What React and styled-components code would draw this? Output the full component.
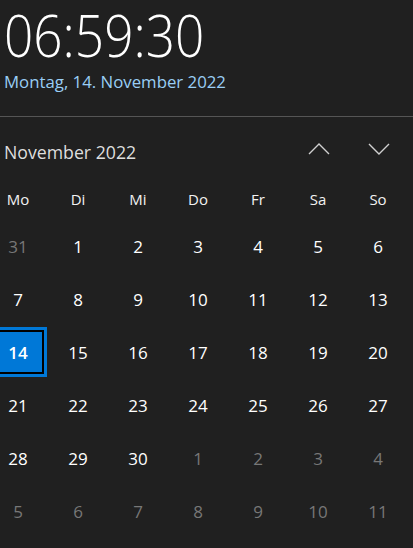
import styled, { createGlobalStyle } from "styled-components";

const GlobalStyle = createGlobalStyle`
  html, body {
    margin: 0;
    padding: 0;
    background: #202020;
  }
  body {
    font-family: "Open Sans", "Noto Sans", sans-serif;
    color: #fff;
  }
`;

const Panel = styled.div`
  width: 413px;
  height: 548px;
  overflow: hidden;
  background: #202020;
`;

const ClockSection = styled.div`
  padding: 0 4px;
  height: 116px;
  border-bottom: 1px solid #555;
`;

const Time = styled.div`
  font-size: 59px;
  font-weight: 300;
  line-height: 68px;
  transform-origin: left top;
  transform: scaleX(0.87);
  white-space: nowrap;
`;

const DateLine = styled.div`
  margin-top: 3px;
  font-size: 16.8px;
  line-height: 22px;
  color: #99cef5;
`;

const MonthBar = styled.div`
  display: flex;
  align-items: center;
  height: 68px;
  padding-left: 4px;
  margin-top: 1px;
`;

const MonthTitle = styled.div`
  flex: 1;
  font-size: 17.7px;
  color: #dedede;
  margin-top: 0;
`;

const NavButton = styled.button`
  width: 60px;
  height: 40px;
  border: 0;
  padding: 0;
  background: transparent;
  display: flex;
  align-items: center;
  justify-content: center;
  margin-top: -6px;
`;

const NavGroup = styled.div`
  display: flex;
  margin-right: 4px;
`;

const Grid = styled.div`
  display: grid;
  grid-template-columns: repeat(7, 58px);
  column-gap: 2px;
  row-gap: 3px;
  margin-left: -11px;
  margin-top: -9px;
`;

const WeekDay = styled.div`
  height: 44px;
  margin-bottom: -3px;
  display: flex;
  align-items: center;
  justify-content: center;
  font-size: 15px;
  color: #f2f2f2;
`;

const Day = styled.div`
  height: 50px;
  box-sizing: border-box;
  display: flex;
  align-items: center;
  justify-content: center;
  font-size: 17px;
  color: ${(p) => (p.$muted ? "#777" : "#fff")};
  ${(p) =>
    p.$selected &&
    `
    background: #0078d7;
    border: 3px solid #0078d7;
    box-shadow: inset 0 0 0 2px #000;
    font-weight: 600;
  `}
`;

const Chevron = ({ up }) => (
  <svg width="22" height="12" viewBox="0 0 22 12">
    <path
      d={up ? "M1 11 L11 1 L21 11" : "M1 1 L11 11 L21 1"}
      fill="none"
      stroke="#d0d0d0"
      strokeWidth="1.4"
    />
  </svg>
);

const weekDays = ["Mo", "Di", "Mi", "Do", "Fr", "Sa", "So"];

function buildDays() {
  const days = [{ n: 31, muted: true }];
  for (let i = 1; i <= 30; i++) days.push({ n: i, muted: false });
  for (let i = 1; i <= 11; i++) days.push({ n: i, muted: true });
  return days;
}

export default function App() {
  const days = buildDays();
  return (
    <Panel>
      <GlobalStyle />
      <ClockSection>
        <Time>06:59:30</Time>
        <DateLine>Montag, 14. November 2022</DateLine>
      </ClockSection>
      <MonthBar>
        <MonthTitle>November 2022</MonthTitle>
        <NavGroup>
          <NavButton>
            <Chevron up />
          </NavButton>
          <NavButton>
            <Chevron />
          </NavButton>
        </NavGroup>
      </MonthBar>
      <Grid>
        {weekDays.map((d) => (
          <WeekDay key={d}>{d}</WeekDay>
        ))}
        {days.map((d, i) => (
          <Day
            key={i}
            $muted={d.muted}
            $selected={!d.muted && d.n === 14}
          >
            {d.n}
          </Day>
        ))}
      </Grid>
    </Panel>
  );
}
